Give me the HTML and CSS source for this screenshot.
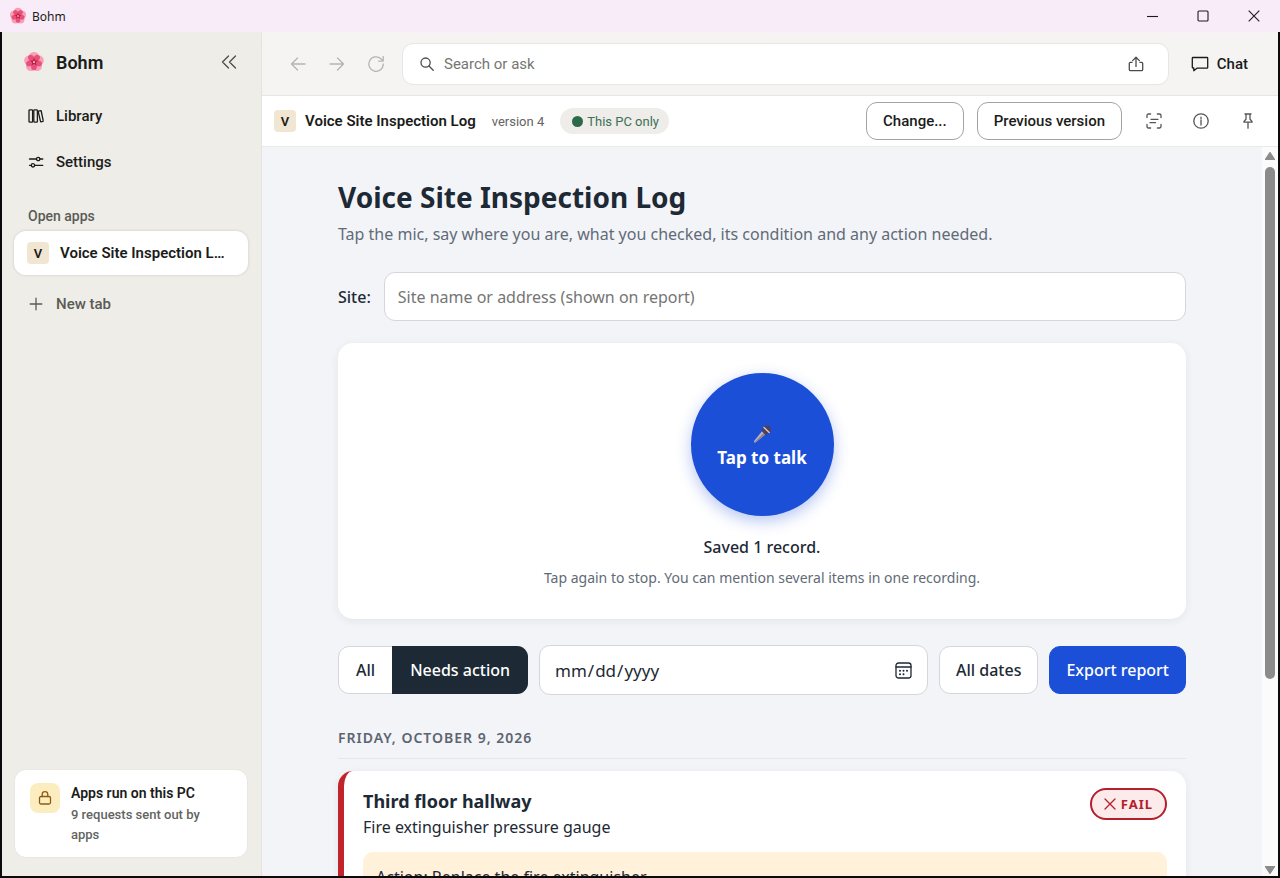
FILE: index.html
```html
<!DOCTYPE html>
<html lang="en">
<head>
    <meta charset="UTF-8">
    <meta name="viewport" content="width=device-width, initial-scale=1.0">
    <title>Bohm</title>
    <link rel="stylesheet" href="styles.css">
</head>
<body>
    <svg class="defs" width="0" height="0" aria-hidden="true">
        <symbol id="flower" viewBox="0 0 24 24">
            <g fill="#f9a0b2">
                <circle cx="12" cy="6.4" r="5.4"/>
                <circle cx="17.3" cy="10.3" r="5.4"/>
                <circle cx="15.3" cy="16.5" r="5.4"/>
                <circle cx="8.7" cy="16.5" r="5.4"/>
                <circle cx="6.7" cy="10.3" r="5.4"/>
            </g>
            <g fill="#e8507c" transform="rotate(36 12 12)">
                <ellipse id="petal" cx="12" cy="7.4" rx="3.2" ry="4.4"/>
                <use href="#petal" transform="rotate(72 12 12)"/>
                <use href="#petal" transform="rotate(144 12 12)"/>
                <use href="#petal" transform="rotate(216 12 12)"/>
                <use href="#petal" transform="rotate(288 12 12)"/>
            </g>
            <path fill="#b5174f" d="M12 7.4l1.2 3 3.2.2-2.5 2 .9 3.1L12 14l-2.8 1.7.9-3.1-2.5-2 3.2-.2z"/>
            <circle cx="12" cy="12" r="1.3" fill="#f8a860"/>
        </symbol>
    </svg>

    <div class="window">
        <header class="titlebar">
            <svg class="flower-small"><use href="#flower"/></svg>
            <span class="window-title">Bohm</span>
            <button class="window-button" aria-label="Minimize">
                <svg width="12" height="12" viewBox="0 0 12 12"><path d="M1 6.5h11"/></svg>
            </button>
            <button class="window-button" aria-label="Maximize">
                <svg width="12" height="12" viewBox="0 0 12 12"><rect x="1" y="1" width="10" height="10" rx="1"/></svg>
            </button>
            <button class="window-button" aria-label="Close">
                <svg width="12" height="12" viewBox="0 0 12 12"><path d="M.7.7l10.6 10.6M11.3.7L.7 11.3"/></svg>
            </button>
        </header>

        <div class="frame">
            <aside class="sidebar">
                <div class="brand">
                    <svg class="flower"><use href="#flower"/></svg>
                    <span class="brand-name">Bohm</span>
                    <button class="icon-button collapse" aria-label="Collapse sidebar">
                        <svg width="16" height="14" viewBox="0 0 16 14"><path d="M7.5 1L1.5 7l6 6M14.5 1l-6 6 6 6"/></svg>
                    </button>
                </div>
                <nav class="nav">
                    <a href="#library" class="nav-link">
                        <svg width="16" height="16" viewBox="0 0 16 16"><rect x="1" y="1.8" width="3.6" height="12.4" rx=".8"/><rect x="5.8" y="1.8" width="3.6" height="12.4" rx=".8"/><path d="M10.5 3.2l2-.6c.3-.1.6 0 .7.4l2 9.7c.1.3-.1.6-.4.7l-1.6.4c-.3.1-.6-.1-.7-.4l-2.2-9.5c-.1-.3 0-.6.2-.7z"/></svg>
                        Library
                    </a>
                    <a href="#settings" class="nav-link">
                        <svg width="16" height="16" viewBox="0 0 16 16"><path d="M1.5 5h7M12 5h2.8M1.5 11.3h1.7M7 11.3h7.8"/><circle cx="10.2" cy="5" r="1.7"/><circle cx="5" cy="11.3" r="1.7"/></svg>
                        Settings
                    </a>
                </nav>
                <h2 class="section-label">Open apps</h2>
                <a href="#app" class="open-app">
                    <span class="app-badge">V</span>
                    <span class="open-app-name">Voice Site Inspection Log</span>
                </a>
                <button class="new-tab">
                    <svg width="16" height="16" viewBox="0 0 16 16"><path d="M8 2.2v11.6M2.2 8h11.6"/></svg>
                    New tab
                </button>
                <section class="privacy">
                    <span class="lock">
                        <svg width="14" height="16" viewBox="0 0 14 16"><rect x="1.5" y="6.5" width="11" height="7.5" rx="1.5"/><path d="M4.2 6.5V4.4a2.8 2.8 0 0 1 5.6 0v2.1"/></svg>
                    </span>
                    <div>
                        <h3 class="privacy-title">Apps run on this PC</h3>
                        <p class="privacy-text">9 requests sent out by apps</p>
                    </div>
                </section>
            </aside>

            <div class="main">
                <div class="toolbar">
                    <button class="icon-button history" aria-label="Back">
                        <svg width="16" height="16" viewBox="0 0 16 16"><path d="M15 8H1.5M7.5 2l-6 6 6 6"/></svg>
                    </button>
                    <button class="icon-button history" aria-label="Forward">
                        <svg width="16" height="16" viewBox="0 0 16 16"><path d="M1 8h13.5M8.5 2l6 6-6 6"/></svg>
                    </button>
                    <button class="icon-button history" aria-label="Reload">
                        <svg width="18" height="18" viewBox="0 0 18 18"><path d="M16.2 8.9a7.2 7.2 0 1 1-2.3-5.1l2.2 2.1M16.2 1.5v4.6h-4.6"/></svg>
                    </button>
                    <div class="search">
                        <svg width="14" height="14" viewBox="0 0 14 14"><circle cx="5.6" cy="5.6" r="4.6"/><path d="M9 9l4.2 4.2"/></svg>
                        <input class="search-input" type="text" placeholder="Search or ask" aria-label="Search or ask">
                        <button class="icon-button share" aria-label="Share">
                            <svg width="16" height="16" viewBox="0 0 16 16"><path d="M4 6.4H2.3c-.6 0-1 .4-1 1v6c0 .8.5 1.3 1.3 1.3h10.8c.8 0 1.3-.5 1.3-1.3v-6c0-.6-.4-1-1-1H12M8 10.5V1.4M4.6 4.6L8 1.2l3.4 3.4"/></svg>
                        </button>
                    </div>
                    <button class="chat">
                        <svg width="18" height="16" viewBox="0 0 18 16"><path d="M2 1.5h14c.4 0 .7.3.7.7v9.2c0 .4-.3.7-.7.7H6.2L2.8 14.7V12H2c-.4 0-.7-.3-.7-.7V2.2c0-.4.3-.7.7-.7z"/></svg>
                        Chat
                    </button>
                </div>

                <div class="app-bar">
                    <span class="app-badge">V</span>
                    <strong class="app-name">Voice Site Inspection Log</strong>
                    <span class="app-version">version 4</span>
                    <span class="scope"><i class="scope-dot"></i>This PC only</span>
                    <button class="outline-button push">Change...</button>
                    <button class="outline-button">Previous version</button>
                    <button class="icon-button" aria-label="Show source">
                        <svg width="16" height="16" viewBox="0 0 16 16"><path d="M1 4.6V2.4C1 1.6 1.6 1 2.4 1h2.2M11.4 1h2.2c.8 0 1.4.6 1.4 1.4v2.2M15 11.4v2.2c0 .8-.6 1.4-1.4 1.4h-2.2M4.6 15H2.4C1.6 15 1 14.4 1 13.6v-2.2M5 6.3h7M4 9.7h5.5"/></svg>
                    </button>
                    <button class="icon-button" aria-label="Details">
                        <svg width="16" height="16" viewBox="0 0 16 16"><circle cx="8" cy="8" r="7.2"/><path d="M8 7v5M8 4.2v1.3"/></svg>
                    </button>
                    <button class="icon-button" aria-label="Pin">
                        <svg width="16" height="16" viewBox="0 0 16 16"><path d="M5 1h6M6 1v5.2L4 8.4v.8h8v-.8l-2-2.2V1M8 9.2v6"/></svg>
                    </button>
                </div>

                <div class="viewport">
                    <main class="page">
                        <h1 class="page-title">Voice Site Inspection Log</h1>
                        <p class="page-intro">Tap the mic, say where you are, what you checked, its condition and any action needed.</p>

                        <div class="site-row">
                            <label for="site">Site:</label>
                            <input class="site-input" id="site" type="text" placeholder="Site name or address (shown on report)">
                        </div>

                        <section class="recorder">
                            <button class="talk">
                                <svg width="20" height="20" viewBox="0 0 20 20">
                                    <path fill="#b9b2bd" d="M10 7.2l3.2 3.4-9.6 7.8c-.8.6-2-.5-1.5-1.4z"/>
                                    <path fill="#8b8391" d="M11.8 9.1l1.4 1.5-9.6 7.8c-.4.3-.9.2-1.2-.1z"/>
                                    <path fill="#5b3c56" d="M9.6 6.6l4.2 4.6 1.7-1.5-4.5-4.8z"/>
                                    <circle cx="14.8" cy="5.6" r="4.1" fill="#514054"/>
                                    <path stroke="#cfc6cf" stroke-width="1.4" d="M12 3.4l5.2 5.2"/>
                                </svg>
                                Tap to talk
                            </button>
                            <p class="status">Saved 1 record.</p>
                            <p class="hint">Tap again to stop. You can mention several items in one recording.</p>
                        </section>

                        <div class="filters">
                            <div class="segmented">
                                <button class="segment">All</button>
                                <button class="segment active">Needs action</button>
                            </div>
                            <div class="date-field">
                                <input class="date-input" type="date" aria-label="Date">
                                <svg class="date-icon" width="17" height="17" viewBox="0 0 17 17"><rect x="1" y="1" width="15" height="15" rx="2.5"/><path d="M1 5h15"/><path class="dots" d="M5 8.8h.01M8.5 8.8h.01M12 8.8h.01M5 12.2h.01M8.5 12.2h.01"/></svg>
                            </div>
                            <button class="page-button">All dates</button>
                            <button class="page-button primary">Export report</button>
                        </div>

                        <h2 class="day">Friday, October 9, 2026</h2>

                        <article class="record">
                            <div class="record-head">
                                <div>
                                    <h3 class="record-place">Third floor hallway</h3>
                                    <p class="record-item">Fire extinguisher pressure gauge</p>
                                </div>
                                <span class="fail">
                                    <svg width="12" height="12" viewBox="0 0 12 12"><path d="M1 1l10 10M11 1L1 11"/></svg>
                                    FAIL
                                </span>
                            </div>
                            <p class="record-action">Action: Replace the fire extinguisher.</p>
                        </article>
                    </main>
                    <div class="scrollbar" aria-hidden="true">
                        <svg width="10" height="8" viewBox="0 0 10 8"><path d="M5 .5L9.5 7.5H.5z"/></svg>
                        <div class="track"><div class="thumb"></div></div>
                        <svg width="10" height="8" viewBox="0 0 10 8"><path d="M5 7.5L9.5.5H.5z"/></svg>
                    </div>
                </div>
            </div>
        </div>
    </div>
</body>
</html>
```

FILE: styles.css
```css
* {
    box-sizing: border-box;
}
body {
    margin: 0;
    font-family: Roboto, "Liberation Sans", sans-serif;
    font-size: 15px;
    color: #1b1c1a;
}
h1, h2, h3, p {
    margin: 0;
}
button, input {
    font: inherit;
    color: inherit;
}
button {
    padding: 0;
    border: 0;
    background: none;
    white-space: nowrap;
    cursor: pointer;
}
a {
    color: inherit;
    text-decoration: none;
}
svg {
    flex: none;
    fill: none;
    stroke: currentColor;
    stroke-width: 1.3;
    stroke-linecap: round;
    stroke-linejoin: round;
}
.defs {
    position: absolute;
}
.window {
    display: flex;
    flex-direction: column;
    height: 100vh;
    overflow: hidden;
}

/* title bar */
.titlebar {
    display: flex;
    align-items: center;
    flex: none;
    height: 32px;
    padding: 0 1px 0 9px;
    background: #f8ecf8;
}
.flower-small {
    width: 18px;
    height: 18px;
    stroke: none;
}
.window-title {
    flex: 1;
    margin-left: 5px;
    font-family: "Noto Sans", sans-serif;
    font-size: 12px;
}
.window-button {
    display: flex;
    align-items: center;
    justify-content: center;
    width: 51px;
    height: 32px;
}
.window-button svg {
    stroke-linecap: butt;
    stroke-width: 1.1;
}
.frame {
    display: flex;
    flex: 1;
    min-height: 0;
    border: solid #0b0b0b;
    border-width: 0 2px 2px;
}

/* sidebar */
.sidebar {
    display: flex;
    flex-direction: column;
    flex: none;
    width: 260px;
    padding: 10px 13px 18px 12px;
    background: #eeede8;
    border-right: 1px solid #e3e3df;
}
.brand {
    display: flex;
    align-items: center;
    height: 40px;
    padding: 0 4px 0 9px;
}
.flower {
    width: 22px;
    height: 22px;
    stroke: none;
}
.brand-name {
    flex: 1;
    margin-left: 11px;
    font-size: 18px;
    font-weight: 600;
}
.icon-button {
    display: flex;
    align-items: center;
    justify-content: center;
    flex: none;
    width: 30px;
    height: 30px;
    color: #4c4d49;
}
.nav {
    display: flex;
    flex-direction: column;
    margin-top: 11px;
}
.nav-link, .new-tab {
    display: flex;
    align-items: center;
    gap: 12px;
    height: 46px;
    padding-left: 14px;
    font-size: 15px;
    font-weight: 500;
}
.section-label {
    margin: 22px 0 6px 14px;
    font-size: 14px;
    line-height: 18px;
    font-weight: 500;
    color: #5a5b56;
}
.open-app {
    display: flex;
    align-items: center;
    gap: 11px;
    height: 44px;
    padding: 0 19px 0 13px;
    background: #fff;
    border-radius: 12px;
    box-shadow: 0 0 2px 1px #dddcd7;
    font-weight: 600;
}
.open-app-name {
    overflow: hidden;
    text-overflow: ellipsis;
    white-space: nowrap;
}
.app-badge {
    display: flex;
    align-items: center;
    justify-content: center;
    flex: none;
    width: 22px;
    height: 22px;
    border-radius: 4px;
    background: #f1e6d1;
    font-size: 13px;
    font-weight: 600;
}
.new-tab {
    margin-top: 6px;
    color: #5a5b56;
}
.privacy {
    display: flex;
    gap: 11px;
    margin-top: auto;
    padding: 13px 24px 12px 15px;
    background: #fff;
    border: 1px solid #e8e7e2;
    border-radius: 12px;
}
.lock {
    display: flex;
    align-items: center;
    justify-content: center;
    flex: none;
    width: 30px;
    height: 30px;
    border-radius: 8px;
    background: #fcedc1;
    color: #8c5a10;
}
.privacy-title {
    font-size: 14px;
    line-height: 20px;
    font-weight: 600;
}
.privacy-text {
    margin-top: 2px;
    font-size: 13px;
    line-height: 20px;
    font-weight: 500;
    color: #63645f;
}

/* browser toolbar */
.main {
    display: flex;
    flex-direction: column;
    flex: 1;
    min-width: 0;
}
.toolbar {
    display: flex;
    align-items: center;
    gap: 9px;
    flex: none;
    height: 64px;
    padding: 0 30px 0 21px;
    background: linear-gradient(#f8f3f5, #f5f4f2 12px);
    border-bottom: 1px solid #e6e6e2;
}
.history {
    color: #b4b5b1;
}
.search {
    display: flex;
    align-items: center;
    flex: 1;
    height: 42px;
    margin: 0 13px 0 2px;
    padding: 0 17px;
    background: #fff;
    border: 1px solid #e6e6e2;
    border-radius: 11px;
    color: #4c4d49;
}
.search-input {
    flex: 1;
    min-width: 0;
    padding: 0 0 0 10px;
    border: 0;
    outline: 0;
    background: none;
    font-size: 15px;
}
.search-input::placeholder {
    color: #757671;
}
.chat {
    display: flex;
    align-items: center;
    gap: 8px;
    font-size: 15px;
    font-weight: 500;
}
.app-bar {
    display: flex;
    align-items: center;
    flex: none;
    height: 51px;
    padding: 0 15px 0 12px;
    background: #fff;
    border-bottom: 1px solid #e9e9e6;
}
.app-name {
    margin-left: 9px;
    font-weight: 600;
}
.app-version {
    margin: 0 16px;
    font-size: 13px;
    color: #63645f;
}
.scope {
    display: flex;
    align-items: center;
    gap: 4px;
    height: 26px;
    padding: 0 10px 0 12px;
    border-radius: 13px;
    background: #eeede9;
    color: #3d7054;
    font-size: 13px;
}
.scope-dot {
    width: 11px;
    height: 11px;
    border-radius: 50%;
    background: #2b6b49;
}
.outline-button {
    height: 38px;
    padding: 0 16px;
    border: 1px solid #a3a4a0;
    border-radius: 11px;
    font-weight: 500;
}
.push {
    margin: 0 13px 0 auto;
}
.app-bar .icon-button {
    margin-left: 17px;
    color: #555652;
}

/* app content */
.viewport {
    display: flex;
    flex: 1;
    min-height: 0;
    background: #f3f4f8;
}
.page {
    flex: 1;
    min-width: 0;
    overflow: hidden;
    padding: 30px max(24px, calc((100% - 864px) / 2));
    font-family: "Noto Sans", "Open Sans", sans-serif;
    font-size: 16px;
    color: #1d2935;
}
.page-title {
    font-size: 28px;
    line-height: 40px;
    font-weight: 700;
}
.page-intro {
    margin-top: 4px;
    font-size: 16px;
    line-height: 26px;
    color: #616b77;
}
.site-row {
    display: flex;
    align-items: center;
    gap: 13px;
    margin-top: 25px;
    font-weight: 500;
}
.site-input {
    flex: 1;
    min-width: 0;
    height: 49px;
    padding: 0 13px;
    background: #fff;
    border: 1px solid #d3d6da;
    border-radius: 11px;
    font-weight: 400;
}
.site-input::placeholder {
    color: #757575;
}
.recorder {
    display: flex;
    flex-direction: column;
    align-items: center;
    margin-top: 22px;
    padding: 30px 24px;
    background: #fff;
    border-radius: 15px;
    box-shadow: 0 2px 8px rgba(29, 41, 53, 0.07);
}
.talk {
    display: flex;
    flex-direction: column;
    align-items: center;
    justify-content: center;
    width: 143px;
    height: 143px;
    padding-top: 6px;
    border-radius: 50%;
    background: #1c4fd8;
    box-shadow: 0 5px 15px rgba(28, 79, 216, 0.32);
    color: #fff;
    font-size: 17px;
    line-height: 28px;
    font-weight: 700;
}
.talk svg {
    stroke: none;
}
.status {
    margin-top: 17px;
    font-size: 16px;
    line-height: 28px;
    font-weight: 500;
}
.hint {
    margin-top: 6px;
    font-size: 14px;
    line-height: 22px;
    color: #616b77;
}
.filters {
    display: flex;
    align-items: center;
    gap: 11px;
    margin-top: 26px;
}
.segmented {
    display: flex;
    height: 48px;
    background: #fff;
    border: 1px solid #d3d6da;
    border-radius: 11px;
}
.segment {
    padding: 0 17px;
    font-weight: 500;
}
.segment.active {
    margin: -1px -1px -1px 0;
    padding: 0 18px;
    border-radius: 0 11px 11px 0;
    background: #1d2935;
    color: #fff;
}
.date-field {
    position: relative;
    flex: 1;
    min-width: 0;
}
.date-input {
    display: block;
    width: 100%;
    height: 50px;
    padding: 0 14px;
    background: #fff;
    border: 1px solid #d3d6da;
    border-radius: 11px;
    font-size: 17px;
}
.date-input::-webkit-calendar-picker-indicator {
    opacity: 0;
}
.date-icon {
    position: absolute;
    top: 17px;
    right: 16px;
    pointer-events: none;
}
.dots {
    stroke-width: 2;
}
.page-button {
    height: 48px;
    padding: 0 16px;
    background: #fff;
    border: 1px solid #d3d6da;
    border-radius: 11px;
    font-weight: 500;
}
.page-button.primary {
    background: #1c4fd8;
    border-color: #1c4fd8;
    color: #fff;
}
.day {
    margin-top: 31px;
    padding-bottom: 9px;
    border-bottom: 1px solid #e3e6ea;
    font-size: 14px;
    line-height: 23px;
    font-weight: 600;
    letter-spacing: 1px;
    text-transform: uppercase;
    color: #5b6570;
}
.record {
    margin-top: 12px;
    padding: 16px 19px 20px;
    background: #fff;
    border-left: 6px solid #c1232c;
    border-radius: 15px;
    box-shadow: 0 2px 8px rgba(29, 41, 53, 0.07);
}
.record-head {
    display: flex;
    align-items: flex-start;
    justify-content: space-between;
}
.record-place {
    font-size: 18px;
    line-height: 28px;
    font-weight: 700;
}
.record-item {
    line-height: 24px;
}
.fail {
    display: flex;
    align-items: center;
    gap: 5px;
    height: 32px;
    margin-top: 1px;
    padding: 0 12px;
    border: 2px solid #b3202c;
    border-radius: 16px;
    background: #fdebeb;
    color: #b3202c;
    font-size: 13px;
    font-weight: 700;
    letter-spacing: 1px;
}
.record-action {
    margin-top: 13px;
    padding: 12px 13px;
    border-radius: 10px;
    background: #fff1da;
    line-height: 26px;
}
.scrollbar {
    display: flex;
    flex-direction: column;
    align-items: center;
    flex: none;
    width: 16px;
    padding: 5px 0 2px;
    background: #fbfbfb;
    color: #8b8b8b;
}
.scrollbar svg {
    fill: currentColor;
}
.track {
    flex: 1;
    width: 10px;
    margin: 7px 0;
}
.thumb {
    height: 74%;
    border-radius: 5px;
    background: #8b8b8b;
}
```
